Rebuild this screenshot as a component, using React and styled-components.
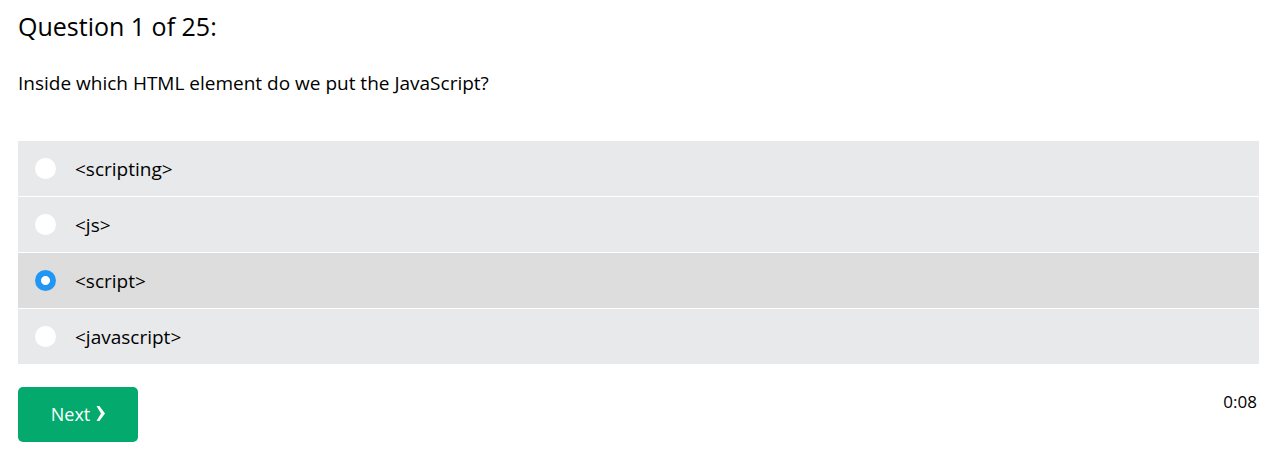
import React, { useState } from "react";
import styled, { createGlobalStyle } from "styled-components";

const GlobalStyle = createGlobalStyle`
  *, *::before, *::after { box-sizing: border-box; }
  body {
    margin: 0;
    background: #fff;
    color: #000;
    font-family: "Open Sans", sans-serif;
    font-size: 19px;
    line-height: 28px;
  }
`;

const Page = styled.main`
  padding: 8px 22px 28px 18px;
`;

const Title = styled.h1`
  margin: 0;
  font-size: 25px;
  line-height: 36px;
  font-weight: 400;
`;

const Question = styled.p`
  margin: 25px 0 44px;
`;

const Options = styled.div`
  display: flex;
  flex-direction: column;
  gap: 1px;
`;

const Option = styled.label`
  display: flex;
  align-items: center;
  gap: 19px;
  height: 55px;
  padding: 0 17px;
  background: ${(p) => (p.$selected ? "#dddddd" : "#e7e9eb")};
  cursor: pointer;
`;

const Radio = styled.input`
  appearance: none;
  flex: none;
  width: 21px;
  height: 21px;
  margin: 0;
  border-radius: 50%;
  background: #fff;
  &:checked {
    background: radial-gradient(circle, #fff 4px, #2196f3 5px);
  }
`;

const Footer = styled.footer`
  display: flex;
  justify-content: space-between;
  align-items: flex-start;
  margin-top: 23px;
`;

const NextButton = styled.button`
  display: flex;
  align-items: center;
  justify-content: center;
  gap: 6px;
  width: 120px;
  height: 55px;
  padding: 0 0 2px;
  border: 0;
  border-radius: 5px;
  background: #04aa6d;
  color: #fff;
  font: inherit;
  font-size: 18px;
  cursor: pointer;
`;

const Chevron = styled.svg`
  width: 9px;
  height: 15px;
  fill: currentColor;
`;

const Timer = styled.span`
  padding-right: 2px;
  font-size: 17px;
  line-height: 30px;
`;

const answers = ["<scripting>", "<js>", "<script>", "<javascript>"];

export default function App() {
  const [selected, setSelected] = useState(2);
  return (
    <>
      <GlobalStyle />
      <Page>
        <Title>Question 1 of 25:</Title>
        <Question id="question">Inside which HTML element do we put the JavaScript?</Question>
        <Options role="radiogroup" aria-labelledby="question">
          {answers.map((answer, i) => (
            <Option key={answer} $selected={i === selected}>
              <Radio type="radio" name="quiz" checked={i === selected} onChange={() => setSelected(i)} />
              <span>{answer}</span>
            </Option>
          ))}
        </Options>
        <Footer>
          <NextButton type="button">
            Next
            <Chevron viewBox="0 0 9 15" aria-hidden="true">
              <path d="M0.5 0H3.4L9 7.5L3.4 15H0.5L5 7.5Z" />
            </Chevron>
          </NextButton>
          <Timer>0:08</Timer>
        </Footer>
      </Page>
    </>
  );
}
